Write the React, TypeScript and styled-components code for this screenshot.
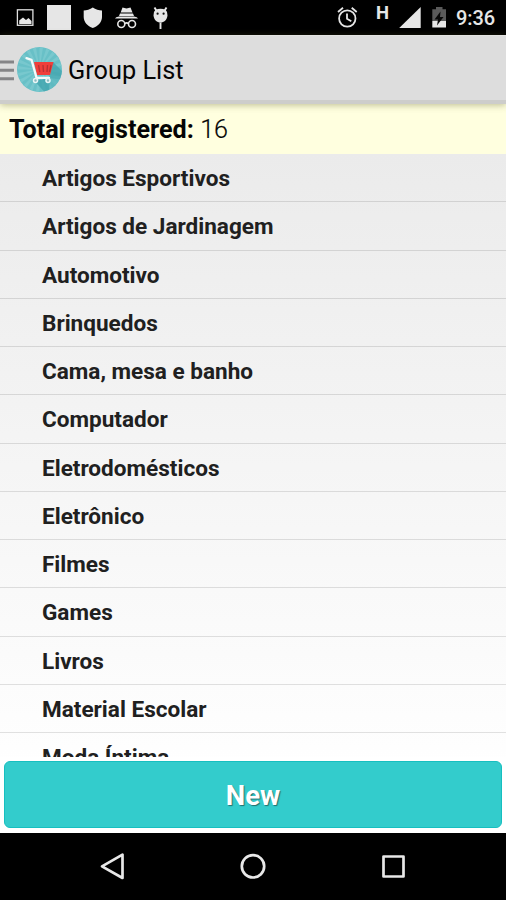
import React from "react";
import styled, { createGlobalStyle } from "styled-components";

const GlobalStyle = createGlobalStyle`
  * { box-sizing: border-box; }
  html, body { margin: 0; padding: 0; background: #000; }
  body { font-family: Roboto, sans-serif; overflow: hidden; }
`;

const Screen = styled.main`
  width: 506px;
  height: 900px;
  display: flex;
  flex-direction: column;
  overflow: hidden;
  background: #fff;
`;

const StatusBar = styled.header`
  flex: 0 0 35px;
  height: 35px;
  min-height: 0;
  display: flex;
  justify-content: space-between;
  background: #000;
  color: #e6e6e6;
`;

const StatusGroup = styled.div<{ $side: "left" | "right" }>`
  display: flex;
  align-items: flex-start;
  height: 35px;
  padding-left: ${(p) => (p.$side === "left" ? "16px" : "0")};
  padding-right: ${(p) => (p.$side === "right" ? "11px" : "0")};
`;

const StatusIcon = styled.svg<{ $gap: number }>`
  display: block;
  height: 35px;
  flex: none;
  margin-right: ${(p) => p.$gap}px;
`;

const NetworkMode = styled.span`
  width: 13px;
  margin-right: 10px;
  font-size: 18.5px;
  line-height: 26px;
  font-weight: 700;
`;

const Clock = styled.time`
  width: 39px;
  height: 35px;
  font-size: 20px;
  line-height: 37px;
  font-weight: 500;
  letter-spacing: -0.1px;
  white-space: nowrap;
`;

const ActionBar = styled.div`
  position: relative;
  z-index: 1;
  flex: 0 0 69px;
  display: flex;
  align-items: center;
  background: #dddddd;
  border-top: 1px solid #e4e4e2;
  border-bottom: 4px solid #cdcdcb;
  box-shadow: 0 1px 7px rgba(90, 90, 40, 0.42);
`;

const DrawerIcon = styled.svg`
  width: 14px;
  height: 22px;
  margin: 4px 3px 0 0;
`;

const AppLogo = styled.svg`
  width: 45px;
  height: 45px;
  margin-top: 2px;
`;

const Title = styled.h1`
  margin: 5px 0 0 6px;
  font-size: 25.3px;
  line-height: 34px;
  font-weight: 400;
  color: #050505;
`;

const Summary = styled.div`
  flex: 0 0 50px;
  height: 50px;
  padding: 2px 9px 0;
  background: #ffffdf;
  color: #050505;
  font-size: 25.15px;
  line-height: 48px;
  white-space: pre;
`;

const Count = styled.span`
  font-weight: 300;
  -webkit-text-stroke: 0.2px #050505;
`;

const Body = styled.section`
  flex: 1;
  min-height: 0;
  display: flex;
  flex-direction: column;
  background: linear-gradient(#ebebeb, #ffffff 92%);
`;

const GroupList = styled.ul`
  flex: 0 0 603px;
  margin: 0;
  padding: 0;
  list-style: none;
  overflow: hidden;
`;

const GroupItem = styled.li`
  height: 48.28px;
  padding-left: 42px;
  border-bottom: 1px solid rgba(0, 0, 0, 0.115);
  color: #202020;
  font-size: 22.56px;
  line-height: 49.4px;
  font-weight: 700;
`;

const Footer = styled.div`
  flex: 1;
  padding: 4px 4px 5px;
  background: #fff;
  border-bottom: 1px solid #b5b5b5;
`;

const NewButton = styled.button`
  display: block;
  width: 498px;
  height: 67px;
  padding: 3px 0 0;
  border: 1px solid #16bfc0;
  border-radius: 6px;
  background: #33cccc;
  color: #fff;
  font: 700 27.5px/62px Roboto, sans-serif;
  text-shadow: 1px 1px 1px rgba(30, 70, 70, 0.7);
`;

const NavBar = styled.nav`
  flex: 0 0 67px;
  display: flex;
  justify-content: center;
  gap: 112px;
  background: #000;
`;

const NavIcon = styled.svg`
  width: 28px;
  height: 67px;
  fill: none;
  stroke: #e8e8e8;
  stroke-width: 2.7;
  stroke-linejoin: round;
`;

const groups = [
  "Artigos Esportivos",
  "Artigos de Jardinagem",
  "Automotivo",
  "Brinquedos",
  "Cama, mesa e banho",
  "Computador",
  "Eletrodomésticos",
  "Eletrônico",
  "Filmes",
  "Games",
  "Livros",
  "Material Escolar",
  "Moda Íntima",
];

const rays = Array.from({ length: 20 }, (_, i) => {
  const a = (i * Math.PI) / 10;
  const b = a + Math.PI / 20;
  const point = (t: number) => `${22.5 + 22 * Math.cos(t)} ${22.5 + 22 * Math.sin(t)}`;
  return `M22.5 22.5L${point(a)}L${point(b)}Z`;
}).join("");

const CartLogo = () => (
  <AppLogo viewBox="0 0 45 45">
    <defs>
      <clipPath id="disc">
        <circle cx="22.5" cy="22.5" r="22.5" />
      </clipPath>
    </defs>
    <circle cx="22.5" cy="22.5" r="22.5" fill="#68c0c7" />
    <path d={rays} fill="#78c8ce" />
    <g clipPath="url(#disc)">
      <path d="M36 15L50 29V33L32 31Z" fill="#3fa3ac" opacity="0.75" />
      <path d="M17.500 34L33 31L32 50Z" fill="#3fa3ac" opacity="0.75" />
      <path d="M33 28L46 30L32 46Z" fill="#58b4bb" opacity="0.55" />
    </g>
    <path d="M17 15H36.500L33 28H20Z" fill="#f03f3b" />
    <path d="M21.500 18l1.300 7M26 18l.5 7M30.500 18l-.5 7M34 18l-1.500 7" stroke="#b93234" strokeWidth="1.4" fill="none" />
    <path d="M9.500 11.200L14.500 12.800L19.500 30.800H32" stroke="#f5fafa" strokeWidth="2.300" fill="none" strokeLinecap="round" strokeLinejoin="round" />
    <g fill="#8bbac0" stroke="#e9f5f5" strokeWidth="1.500">
      <circle cx="18.500" cy="33.500" r="2" />
      <circle cx="31" cy="33.500" r="2" />
    </g>
  </AppLogo>
);

export default function App() {
  return (
    <Screen>
      <GlobalStyle />
      <StatusBar>
        <StatusGroup $side="left">
          <StatusIcon $gap={13} width="18" viewBox="16 0 18 35">
            <rect x="17.400" y="9.800" width="15.500" height="15.500" fill="none" stroke="#e0e0e0" strokeWidth="1.300" />
            <path d="M19.200 24V20.500l3.800-3 3 2.500 2.500-2 3 3v3Z" fill="#e6e6e6" />
          </StatusIcon>
          <StatusIcon $gap={12} width="24" viewBox="47 0 24 35">
            <rect x="47" y="5" width="24" height="25" fill="#e6e6e6" />
          </StatusIcon>
          <StatusIcon $gap={12} width="20" viewBox="83 0 20 35">
            <path d="M92.800 7.500C90 9.500 86.500 10.500 83.700 10.500V17C83.700 22 87.500 26 92.800 28C98.200 26 102 22 102 17V10.500C99 10.500 95.500 9.500 92.800 7.500Z" fill="#e6e6e6" />
          </StatusIcon>
          <StatusIcon $gap={14} width="24" viewBox="115 0 24 35">
            <path d="M122.500 7.500L126.500 8.500L130.500 7.500L132.500 12.500H120.700ZM120 13.500H133L134 16H119Z" fill="#e6e6e6" />
            <path d="M115 18.500Q115.500 17 119 16.500H134Q137.500 17 138 18.500Z" fill="#e6e6e6" />
            <g fill="none" stroke="#e6e6e6" strokeWidth="1.600">
              <circle cx="121.300" cy="24" r="3.500" />
              <circle cx="132" cy="24" r="3.500" />
              <path d="M124.800 23.500q1.850-1.200 3.700 0" />
            </g>
          </StatusIcon>
          <StatusIcon $gap={0} width="16" viewBox="153 0 16 35">
            <path d="M154.500 7.500l2.500 4M166.500 7.500l-2.500 4M160.500 22.500v6.500" stroke="#e6e6e6" strokeWidth="1.900" />
            <path d="M155.300 9.900Q160.500 7.500 165.700 9.900Q168 12 167.500 15.500C167 20 164 22.500 160.500 22.500C157 22.500 154 20 153.500 15.500Q153 12 155.300 9.900Z" fill="#e6e6e6" />
            <circle cx="157.600" cy="13.700" r="1.100" fill="#111" />
            <circle cx="163.600" cy="13.700" r="1.100" fill="#111" />
          </StatusIcon>
        </StatusGroup>
        <StatusGroup $side="right">
          <StatusIcon $gap={18} width="21" viewBox="337 0 21 35">
            <g fill="none" stroke="#e6e6e6" strokeWidth="1.800">
              <circle cx="347.300" cy="18.500" r="8.200" />
              <path d="M347 13.500V18.700L351.300 21.300M338 12l5-4.200M356.700 12l-5-4.200" />
            </g>
          </StatusIcon>
          <NetworkMode>H</NetworkMode>
          <StatusIcon $gap={11} width="22" viewBox="399.300 0 22 35">
            <path d="M399.500 28L421 7V28Z" fill="#e6e6e6" />
          </StatusIcon>
          <StatusIcon $gap={9} width="15" viewBox="432 0 15 35">
            <path d="M432.300 9.300H436V7H442.500V9.300H446V21H432.300Z" fill="#5a5a5a" />
            <path d="M432.300 21H446V27.500H432.300Z" fill="#e6e6e6" />
            <path d="M440.500 11.500L434.500 19.500H438L437 25.500L443.500 17H440Z" fill="#080808" />
          </StatusIcon>
          <Clock>9:36</Clock>
        </StatusGroup>
      </StatusBar>
      <ActionBar>
        <DrawerIcon viewBox="0 0 14 22">
          <path d="M0 3H14M0 11.300H14M0 19.800H14" stroke="#858587" strokeWidth="3" />
        </DrawerIcon>
        <CartLogo />
        <Title>Group List</Title>
      </ActionBar>
      <Summary>
        <b>Total registered:</b> <Count>16</Count>
      </Summary>
      <Body>
        <GroupList>
          {groups.map((name) => (
            <GroupItem key={name}>{name}</GroupItem>
          ))}
        </GroupList>
        <Footer>
          <NewButton>New</NewButton>
        </Footer>
      </Body>
      <NavBar>
        <NavIcon viewBox="99 833 28 67">
          <path d="M102 866.300L122.500 854.700V878Z" />
        </NavIcon>
        <NavIcon viewBox="239 833 28 67">
          <circle cx="253" cy="866.300" r="11.200" />
        </NavIcon>
        <NavIcon viewBox="379 833 28 67">
          <rect x="383.500" y="856.500" width="20" height="20" />
        </NavIcon>
      </NavBar>
    </Screen>
  );
}
